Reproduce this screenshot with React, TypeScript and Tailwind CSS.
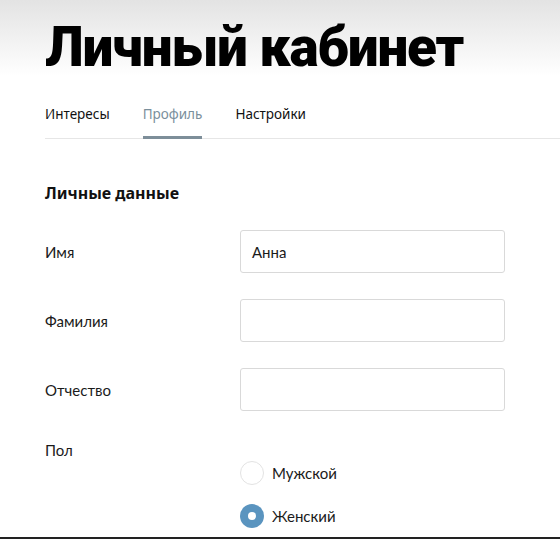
import React from "react";

const Field = ({ label, value }: { label: string; value?: string }) => (
  <div className="flex items-center h-[43px]">
    <span className="w-[195px] text-[15px] text-[#1a1a1a]">{label}</span>
    <div className="w-[265px] h-[43px] rounded-[3px] border border-[#d9d9d9] bg-white flex items-center px-[11px] text-[15px] text-[#1a1a1a]">
      {value}
    </div>
  </div>
);

const Radio = ({ label, checked }: { label: string; checked?: boolean }) => (
  <div className="flex items-center gap-2 h-6">
    {checked ? (
      <span className="w-6 h-6 rounded-full bg-[#5a94bf] flex items-center justify-center">
        <span className="w-2 h-2 rounded-full bg-white" />
      </span>
    ) : (
      <span className="w-6 h-6 rounded-full border border-[#e3e3e3] bg-white" />
    )}
    <span className="text-[15px] text-[#1a1a1a]">{label}</span>
  </div>
);

export default function App() {
  return (
    <div className="h-[539px] w-[560px] overflow-hidden flex flex-col bg-white font-['Lato',sans-serif]">
      <div className="flex-1">
        <div className="bg-gradient-to-b from-[#e3e3e3] to-white pl-[45px] pt-[20px] h-[76px]">
          <h1 className="font-['Roboto',sans-serif] font-black text-[55px] leading-none text-black tracking-[-1.2px]">
            Личный кабинет
          </h1>
        </div>

        <div className="pl-[45px] mt-[28px]">
          <div className="flex gap-[33px] border-b border-[#e6e6e6] text-[13.5px] font-['Noto_Sans',sans-serif]">
            <span className="pb-[14px] text-[#111]">Интересы</span>
            <span className="pb-[12px] text-[#7a8f9c] border-b-[3px] border-[#7d8e99] -mb-px">Профиль</span>
            <span className="pb-[14px] text-[#111]">Настройки</span>
          </div>

          <h2 className="mt-[42px] text-[16px] leading-[24px] font-bold text-[#111] font-['Noto_Sans',sans-serif]">
            Личные данные
          </h2>

          <div className="mt-[25px] flex flex-col gap-[26px]">
            <Field label="Имя" value="Анна" />
            <Field label="Фамилия" />
            <Field label="Отчество" />
          </div>

          <div className="mt-[28px] flex">
            <span className="w-[195px] text-[15px] text-[#1a1a1a]">Пол</span>
          </div>
          <div className="ml-[195px] -mt-px flex flex-col gap-[19px]">
            <Radio label="Мужской" />
            <Radio label="Женский" checked />
          </div>
        </div>
      </div>
      <div className="h-[2px] bg-[#222]" />
    </div>
  );
}
